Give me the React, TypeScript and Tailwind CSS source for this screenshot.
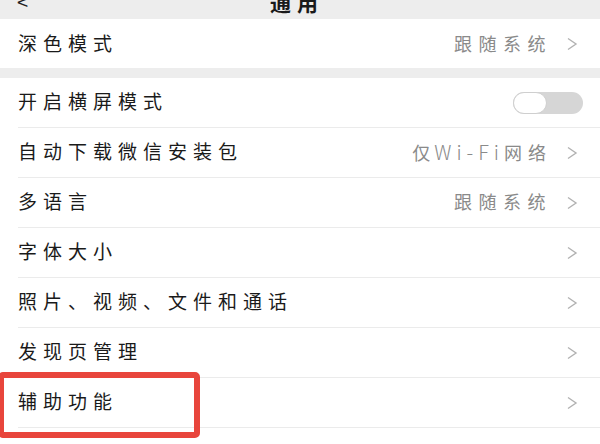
import React from 'react';

type Row = {
    label: string;
    value?: React.ReactNode;
    toggle?: boolean;
    chevron?: boolean;
};

const wifiValue = (
    <>
        <span className="tracking-[4px]">仅</span>
        <span className="text-[20px] tracking-[5px] font-light">Wi-Fi</span>
        <span className="tracking-[6px]">网络</span>
    </>
);

const rows: Row[] = [
    { label: '开启横屏模式', toggle: true },
    { label: '自动下载微信安装包', value: wifiValue, chevron: true },
    { label: '多语言', value: '跟随系统', chevron: true },
    { label: '字体大小', chevron: true },
    { label: '照片、视频、文件和通话', chevron: true },
    { label: '发现页管理', chevron: true },
    { label: '辅助功能', chevron: true },
];

const Chevron: React.FC = () => (
    <svg width="12" height="14" viewBox="0 0 12 14" className="ml-[14px]">
        <path d="M2 1.5 L10 7 L2 12.5" fill="none" stroke="#b2b2b2" strokeWidth="1.4" />
    </svg>
);

const Toggle: React.FC = () => (
    <div className="w-[70px] h-[22px] -mr-[5px] rounded-full bg-[#d6d6d6] flex items-center">
        <div className="w-[34px] h-[22px] rounded-full bg-white border border-[#cfcfcf]" />
    </div>
);

const SettingRow: React.FC<{ row: Row }> = ({ row }) => (
    <div className="flex h-[50px] items-center pl-[18px]">
        <div className="flex flex-1 h-full items-center justify-between pr-[22px] border-b border-[#ebebeb]">
            <span className="text-[19px] tracking-[6px] text-[#1a1a1a] -mt-[2px]">{row.label}</span>
            <div className="flex items-center">
                {row.value && (
                    <span className="text-[18px] tracking-[6.5px] text-[#8a8a8a] -mt-[2px]">{row.value}</span>
                )}
                {row.chevron && <Chevron />}
                {row.toggle && <Toggle />}
            </div>
        </div>
    </div>
);

const App: React.FC = () => {
    return (
        <div
            className="relative w-[600px] h-[444px] overflow-hidden bg-white"
            style={{ fontFamily: '"Noto Sans CJK SC", "Noto Sans", sans-serif' }}
        >
            {/* header, mostly scrolled off */}
            <div className="h-[19px] bg-[#ededed] overflow-hidden flex items-start">
                <div className="flex w-full items-start -mt-[13px]">
                    <span className="ml-[17px] text-[20px] text-[#222]">&lt;</span>
                    <span className="ml-[242px] text-[21px] font-bold tracking-[6px] text-[#1a1a1a]">通用</span>
                </div>
            </div>

            <div className="flex h-[49px] items-center justify-between pl-[18px] pr-[22px]">
                <span className="text-[19px] tracking-[6px] text-[#1a1a1a]">深色模式</span>
                <div className="flex items-center">
                    <span className="text-[18px] tracking-[6.5px] text-[#8a8a8a]">跟随系统</span>
                    <Chevron />
                </div>
            </div>

            <div className="h-[10px] bg-[#ededed]" />

            {rows.map((r) => (
                <SettingRow key={r.label} row={r} />
            ))}

            {/* highlight box */}
            <div className="absolute left-[-2px] top-[372px] w-[202px] h-[66px] border-[6px] border-[#e8453c] rounded-[5px]" />
        </div>
    );
};

export default App;
